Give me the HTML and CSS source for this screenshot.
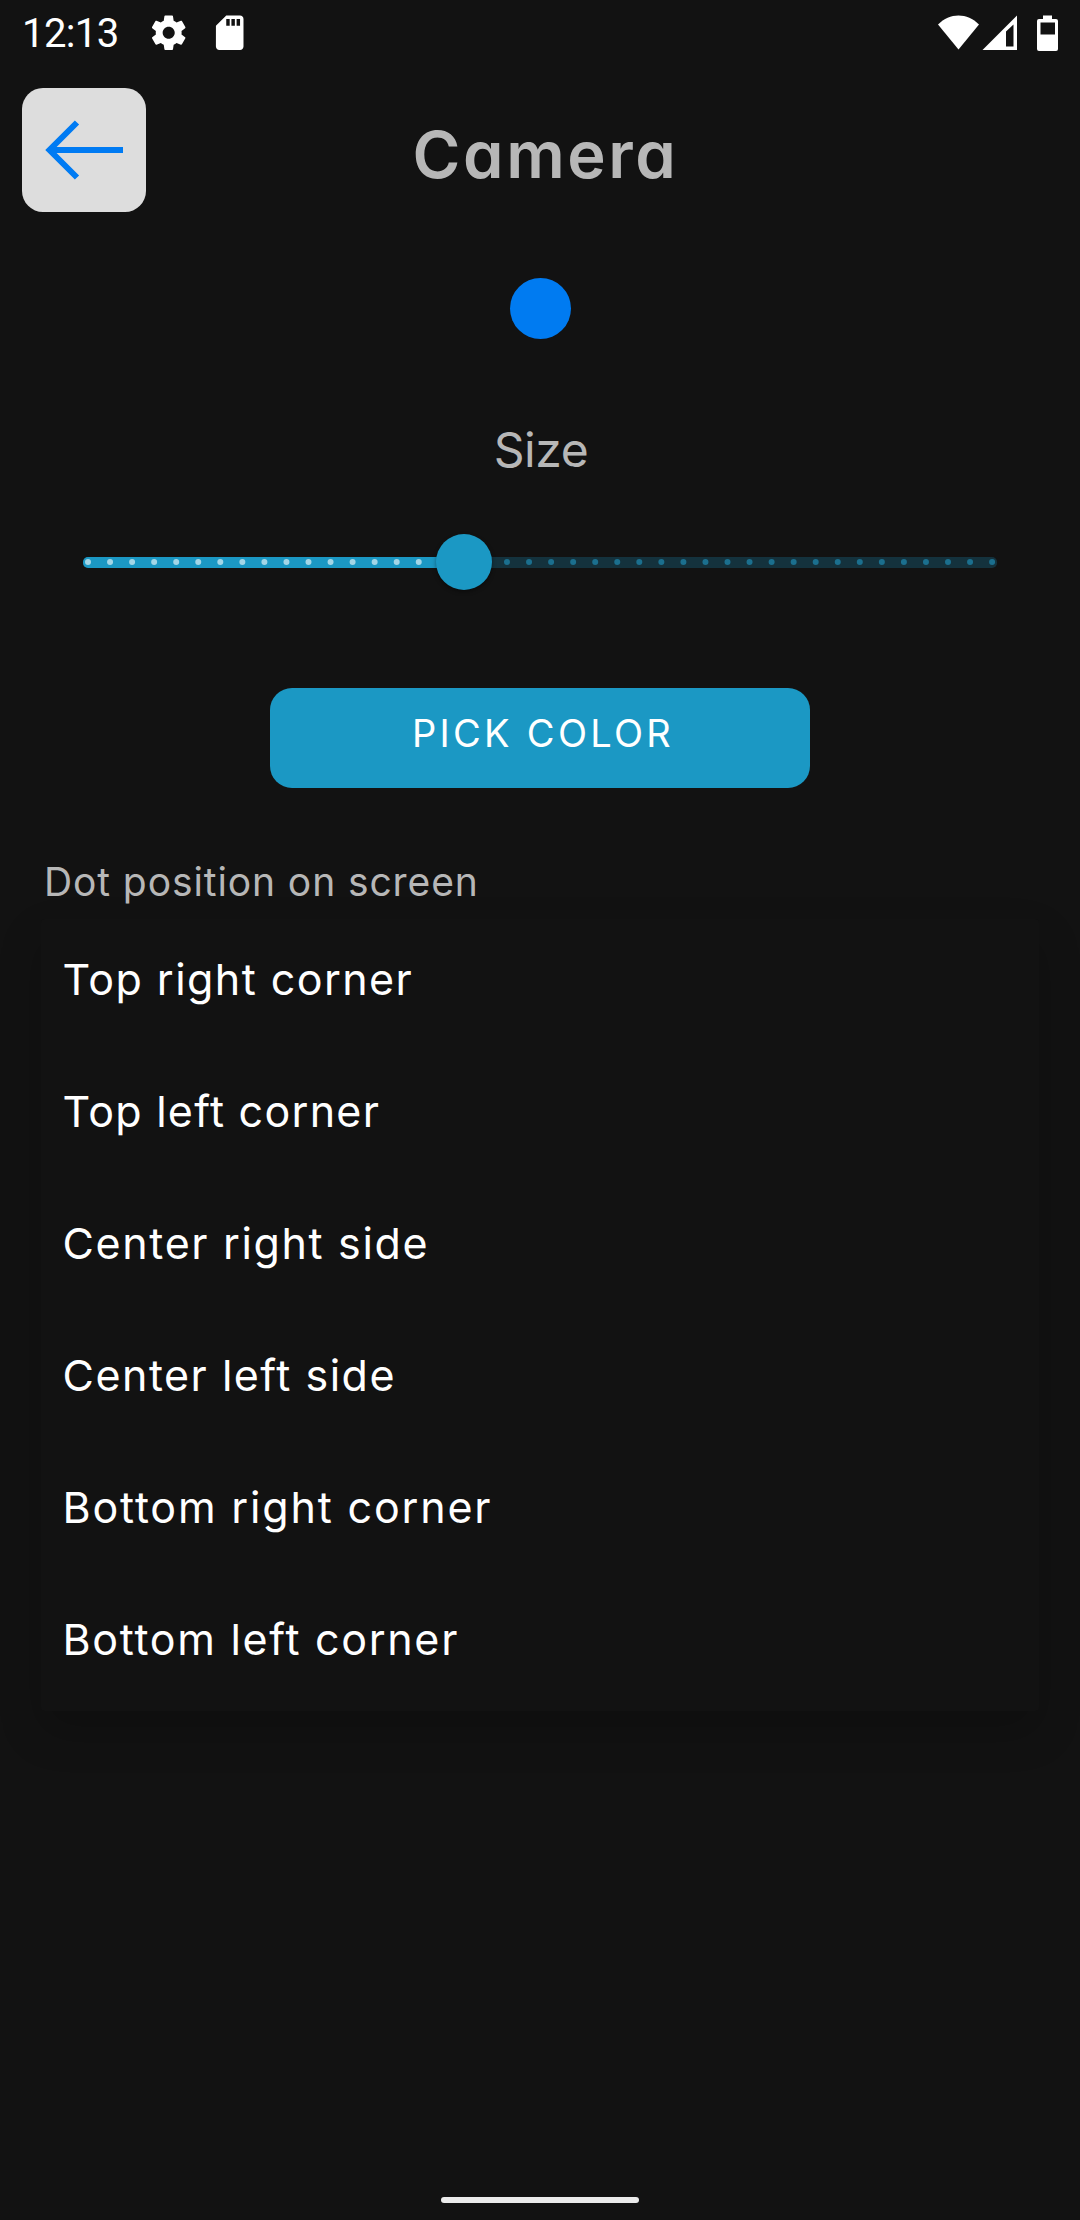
FILE: index.html
```
<!DOCTYPE html>
<html lang="en">
<head>
<meta charset="utf-8">
<title>Camera</title>
<link rel="stylesheet" href="styles.css">
</head>
<body>
<div class="screen">
  <div class="status">
    <span class="clock">12:13</span>
    <svg class="gear" viewBox="0 0 24 24"><path d="M19.43 12.98c.04-.32.07-.64.07-.98s-.03-.66-.07-.98l2.11-1.65c.19-.15.24-.42.12-.64l-2-3.46c-.12-.22-.39-.3-.61-.22l-2.49 1c-.52-.4-1.08-.73-1.69-.98l-.38-2.65C14.46 2.18 14.25 2 14 2h-4c-.25 0-.46.18-.49.42l-.38 2.65c-.61.25-1.17.59-1.69.98l-2.49-1c-.23-.09-.49 0-.61.22l-2 3.46c-.13.22-.07.49.12.64l2.11 1.65c-.04.32-.07.65-.07.98s.03.66.07.98l-2.11 1.65c-.19.15-.24.42-.12.64l2 3.46c.12.22.39.3.61.22l2.49-1c.52.4 1.08.73 1.69.98l.38 2.65c.03.24.24.42.49.42h4c.25 0 .46-.18.49-.42l.38-2.65c.61-.25 1.17-.59 1.69-.98l2.49 1c.23.09.49 0 .61-.22l2-3.46c.12-.22.07-.49-.12-.64l-2.11-1.65zM12 15.5c-1.93 0-3.5-1.57-3.5-3.5s1.57-3.5 3.5-3.5 3.5 1.57 3.5 3.5-1.57 3.5-3.5 3.5z"/></svg>
    <svg class="card" viewBox="0 0 24 24"><path d="M18 2h-8L4.02 8 4 20c0 1.1.9 2 2 2h12c1.1 0 2-.9 2-2V4c0-1.1-.9-2-2-2zm-6 6h-2V4h2v4zm3 0h-2V4h2v4zm3 0h-2V4h2v4z"/></svg>
    <svg class="system" viewBox="0 0 120 36" fill-rule="evenodd">
      <path d="M20.5 34.5 0 9.500C6 3.500 13 .5 20.500 .5S35 3.500 41 9.500Z"/>
      <path d="M44.500 35H79V.5ZM68 16.500 75.500 9.500V31.500H68Z"/>
      <path d="M105 .5h9v3.500h4q2 0 2 2v28q0 2-2 2h-17q-2 0-2-2v-28q0-2 2-2h4ZM102.500 7.500v12h14.500v-12Z"/>
    </svg>
  </div>
  <header class="header">
    <button class="back" aria-label="Back"><svg viewBox="0 0 124 124"><path d="M101 62H30M55 34.500 27.500 62 55 89.500"/></svg></button>
    <h1 class="title">Camera</h1>
  </header>
  <div class="preview"></div>
  <h2 class="size">Size</h2>
  <svg class="slider" viewBox="0 0 914 66">
    <rect class="track" x="0" y="27" width="914" height="11" rx="5"/>
    <rect class="track-on" x="0" y="27" width="385" height="11" rx="5"/>
    <path class="ticks" d="M379.900 32H909.500"/>
    <path class="ticks ticks-on" d="M5 32H345"/>
    <circle class="thumb" cx="381" cy="32" r="28"/>
  </svg>
  <button class="pick">PICK COLOR</button>
  <p class="label">Dot position on screen</p>
  <ul class="options">
    <li>Top right corner</li>
    <li>Top left corner</li>
    <li>Center right side</li>
    <li>Center left side</li>
    <li>Bottom right corner</li>
    <li>Bottom left corner</li>
  </ul>
  <div class="home"></div>
</div>
</body>
</html>
```
FILE: styles.css
```
* { box-sizing: border-box; }
body { margin: 0; background: #121212; }
.screen {
  width: 1080px;
  height: 2220px;
  display: flex;
  flex-direction: column;
  align-items: center;
  overflow: hidden;
  background: #121212;
  color: #fff;
  font-family: Inter, "Liberation Sans", sans-serif;
  font-feature-settings: "cv11";
}
.status {
  width: 100%;
  height: 88px;
  padding: 12px 22px 0 22px;
  display: flex;
  align-items: flex-start;
  fill: #fff;
}
.clock {
  width: 126px;
  font: 40px/44px Roboto, sans-serif;
  letter-spacing: -0.600px;
}
.gear { width: 41.400px; height: 41.400px; }
.card { width: 41.400px; height: 41.400px; margin-left: 19.500px; }
.system { width: 120px; height: 36px; margin: 3px 0 0 auto; }
.header {
  width: 100%;
  height: 124px;
  padding: 0 22px;
  display: grid;
  grid-template-columns: 124px 1fr 124px;
  grid-template-rows: 124px;
}
.back {
  padding: 0;
  border: 0;
  border-radius: 21px;
  background: #ddd;
}
.back svg { display: block; fill: none; stroke: #007bf3; stroke-width: 6; }
.title {
  margin: 0;
  padding-left: 11px;
  color: #b7b7b7;
  font-size: 65px;
  font-weight: 600;
  line-height: 133px;
  letter-spacing: 2.600px;
  text-align: center;
}
.preview {
  flex: none;
  width: 61px;
  height: 61px;
  margin: 66px 0 0 1px;
  border-radius: 50%;
  background: #007bf1;
}
.size {
  margin: 80.500px 0 0 2px;
  color: #b7b7b7;
  font-size: 48px;
  font-weight: 400;
  line-height: 60px;
  letter-spacing: -0.400px;
}
.slider { flex: none; width: 914px; height: 66px; margin-top: 50px; }
.track { fill: #14323d; }
.track-on, .thumb { fill: #1b98c4; }
.thumb { filter: drop-shadow(0 2px 2px #0006); }
.ticks { stroke: #1b6f8e; stroke-width: 6; stroke-linecap: round; stroke-dasharray: 0 22.050; }
.ticks-on { stroke: #a3d6e7; }
.pick {
  width: 540px;
  height: 100px;
  margin-top: 92px;
  padding: 0 0 9px 6px;
  border: 0;
  border-radius: 22px;
  background: #1b98c4;
  color: #fff;
  font: 38px/44px Inter, sans-serif;
  letter-spacing: 3.300px;
}
.label {
  align-self: flex-start;
  margin: 70px 0 0 44px;
  color: #b7b7b7;
  font-size: 39px;
  line-height: 48px;
  letter-spacing: 0.900px;
}
.options {
  width: 998px;
  margin: 13px 0 0;
  padding: 0;
  border-radius: 4px;
  list-style: none;
  background: #121212;
  box-shadow: 0 20px 44px #0003;
}
.options li {
  height: 132px;
  padding: 0 21.500px;
  font-size: 43px;
  line-height: 121px;
}
.options li:nth-child(1) { letter-spacing: 1.440px; }
.options li:nth-child(2) { letter-spacing: 1.270px; }
.options li:nth-child(3) { letter-spacing: 1.650px; }
.options li:nth-child(4) { letter-spacing: 1.500px; }
.options li:nth-child(5) { letter-spacing: 1.820px; }
.options li:nth-child(6) { letter-spacing: 1.690px; }
.home {
  width: 198px;
  height: 6px;
  margin: auto 0 17px;
  border-radius: 3px;
  background: #ebebeb;
}
```
